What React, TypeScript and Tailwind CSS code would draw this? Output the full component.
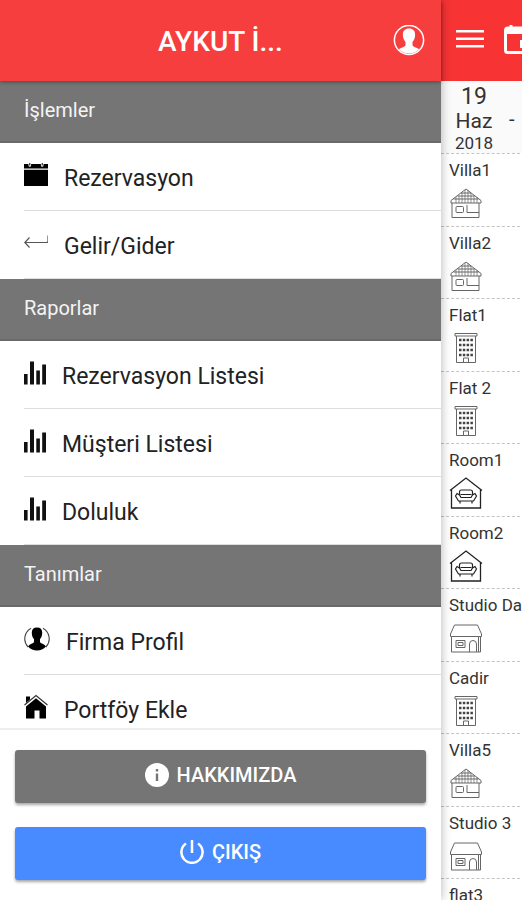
import React from 'react';

type IconName = 'calendar' | 'return' | 'stats' | 'contact' | 'home';
type RoomKind = 'villa' | 'flat' | 'room' | 'studio';

const sections: { title: string; items: { icon: IconName; label: string }[] }[] = [
  {
    title: 'İşlemler',
    items: [
      { icon: 'calendar', label: 'Rezervasyon' },
      { icon: 'return', label: 'Gelir/Gider' },
    ],
  },
  {
    title: 'Raporlar',
    items: [
      { icon: 'stats', label: 'Rezervasyon Listesi' },
      { icon: 'stats', label: 'Müşteri Listesi' },
      { icon: 'stats', label: 'Doluluk' },
    ],
  },
  {
    title: 'Tanımlar',
    items: [
      { icon: 'contact', label: 'Firma Profil' },
      { icon: 'home', label: 'Portföy Ekle' },
    ],
  },
];

const rooms: { name: string; kind: RoomKind }[] = [
  { name: 'Villa1', kind: 'villa' },
  { name: 'Villa2', kind: 'villa' },
  { name: 'Flat1', kind: 'flat' },
  { name: 'Flat 2', kind: 'flat' },
  { name: 'Room1', kind: 'room' },
  { name: 'Room2', kind: 'room' },
  { name: 'Studio Da', kind: 'studio' },
  { name: 'Cadir', kind: 'flat' },
  { name: 'Villa5', kind: 'villa' },
  { name: 'Studio 3', kind: 'studio' },
  { name: 'flat3', kind: 'flat' },
];

const MenuIcon = ({ name }: { name: IconName }) => {
  switch (name) {
    case 'calendar':
      return (
        <svg width="24" height="24" viewBox="0 0 24 24" fill="currentColor">
          <path d="M0 1h4.500v1.500a1 1 0 0 0 2.600 0V1h9.800v1.500a1 1 0 0 0 2.600 0V1H24v4.600H0z" />
          <path d="M0 6.800h24V23H0zM5.300 0h1v2.500h-1zM17.700 0h1v2.500h-1z" />
        </svg>
      );
    case 'return':
      return (
        <svg width="24" height="24" viewBox="0 0 24 24" fill="none" stroke="#555" strokeWidth="1.2">
          <path d="M24 4.500v5.500q0 1.500-1.500 1.500H1M5.500 6.500.8 11.500l4.700 5" />
        </svg>
      );
    case 'stats':
      return (
        <svg width="22" height="24" viewBox="0 0 22 24" fill="#111">
          <path d="M0 13h3.600v10.500H0zM6 .5h4v23H6zM12.300 9.500h3.600v14h-3.600zM18.200 3.500H22v20h-3.800z" />
        </svg>
      );
    case 'contact':
      return (
        <svg width="26" height="26" viewBox="0 0 26 26">
          <path d="M7 2.300a12 12 0 0 0-3 18.700M19 2.300a12 12 0 0 1 3 18.700" fill="none" stroke="#444" strokeWidth="1.100" />
          <path d="M13 1.500c3.600 0 5.400 2.200 5.200 5.400-.1 2.200-.5 4.200-2.200 6.100v3.200c1.500 1.600 4.600 1.800 6 4.300A12 12 0 0 1 4 20.500c1.400-2.500 4.500-2.700 6-4.300V13c-1.700-1.900-2.100-3.900-2.200-6.100C7.600 3.700 9.400 1.500 13 1.500z" fill="currentColor" />
        </svg>
      );
    case 'home':
      return (
        <svg width="24" height="26" viewBox="0 0 24 26">
          <path d="M2 2.500h4v3L2 9z" fill="currentColor" />
          <path d="M.5 11 12 1.500 23.500 11" fill="none" stroke="#333" strokeWidth="1.200" />
          <path d="M12 4.200 22 12.500v12h-6.500v-8h-5v8H2v-12z" fill="currentColor" />
        </svg>
      );
  }
};

const RoomIcon = ({ kind }: { kind: RoomKind }) => (
  <svg width="34" height="34" viewBox="0 0 34 34" fill="none" stroke="#666" strokeWidth="1">
    {kind === 'villa' && (
      <>
        <path d="M2 14.500 17 3l15 11.500v2.500H2zM3 17v14.500h27V17M12 7h10M8.500 10h17M4.500 13h25" />
        <path d="M7 11v6M10 10v7M13 7v10M16 4v13M19 4v13M22 7v10M25 10v7M28 11v6" strokeWidth=".7" />
        <path d="M8 20.500h5.500q1 0 1 1v4q0 1-1 1H8q-1 0-1-1v-4q0-1 1-1zM18 19v7.500M18 26.500h12" />
      </>
    )}
    {kind === 'flat' && (
      <>
        <path d="M6 2.500h22v2.500H6zM7.500 5v26.500h19V5M14.500 31v-4h5v4" />
        <path d="M10 9h14M10 14h14M10 19h14M10 24h14" stroke="#444" strokeWidth="2.500" strokeDasharray="2.500 1.300" />
      </>
    )}
    {kind === 'room' && (
      <g stroke="#222">
        <path d="M1 14.500 17 2l16 12.500M2.500 13.500v18.500h29V13.500" strokeWidth="1.300" />
        <path d="M10.500 18.500v-2.500q0-2 2-2h9q2 0 2 2v2.500M10.500 19l-2.500-1.500-1.500 2.500 3 5h15l3-5-1.500-2.500-2.500 1.500-1.500 2.500h-10zM11.500 18.500h11M11 25v2.500M23 25v2.500" strokeWidth="1.200" />
      </g>
    )}
    {kind === 'studio' && (
      <>
        <path d="M5.500 4h23l4 9v2.500h-3v15.500h-27V15.500h-1V13zM2.500 15.500h27M29.500 15.500h2V31h-2" />
        <path d="M7 19.500h9v7H7zM9 21.500h5v3H9zM20.500 31v-8q0-3.500 3.500-3.500t3.500 3.500v8" />
      </>
    )}
  </svg>
);

const SideMenu = () => (
  <aside className="relative z-10 flex h-full min-w-0 flex-1 flex-col bg-white shadow-[0_0_10px_rgba(0,0,0,0.3)]">
    <header className="relative z-10 flex h-[81px] shrink-0 items-center bg-[#f73e3f] pr-4 text-white shadow-[0_1px_4px_rgba(0,0,0,0.4)]">
      <h1 className="min-w-0 flex-1 pt-0.5 pl-12 text-center text-[28px] font-medium">AYKUT İ...</h1>
      <button aria-label="Profil">
        <svg width="32" height="32" viewBox="0 0 32 32">
          <circle cx="16" cy="15" r="14.600" fill="none" stroke="white" strokeWidth="1.500" />
          <path d="M16 3.500c4.200 0 6.300 2.700 6.100 6.500-.1 2.600-.7 4.800-2.600 7v3.500c1.700 1.900 4.700 2 6.700 3.700a14 14 0 0 1-20.400 0c2-1.700 5-1.800 6.700-3.700V17c-1.900-2.200-2.500-4.400-2.600-7-.2-3.800 1.900-6.500 6.100-6.500z" fill="white" />
        </svg>
      </button>
    </header>

    <nav className="min-h-0 flex-1 overflow-hidden">
      {sections.map((section) => (
        <section key={section.title}>
          <h2 className="flex h-[62px] items-center border-b-2 border-[#696969] bg-[#757575] px-6 pb-0.5 text-xl text-[#f4f4f4]">
            {section.title}
          </h2>
          <ul>
            {section.items.map((item) => (
              <li key={item.label} className="pl-6">
                <button className="flex h-[68px] w-full items-center gap-4 border-b border-[#dedede] text-left text-[23px] text-[#222]">
                  <span className="pb-1 text-black">
                    <MenuIcon name={item.icon} />
                  </span>
                  <span className="pt-1.5">{item.label}</span>
                </button>
              </li>
            ))}
          </ul>
        </section>
      ))}
    </nav>

    <footer className="flex shrink-0 flex-col gap-6 border-t-2 border-[#eeeeee] px-[15px] pt-5 pb-5 text-xl font-medium text-white">
      <button className="flex h-[53px] items-center justify-center gap-2 rounded-[3px] bg-[#757575] pb-1 shadow-[0_2px_3px_rgba(0,0,0,0.35)]">
        <svg width="24" height="24" viewBox="0 0 24 24">
          <circle cx="12" cy="12" r="12" fill="white" />
          <path d="M10.800 6h2.400v2.400h-2.400zM10.800 10.500h2.400V18h-2.400z" fill="#757575" />
        </svg>
        HAKKIMIZDA
      </button>
      <button className="flex h-[53px] items-center justify-center gap-2 rounded-[3px] bg-[#488aff] pb-1 shadow-[0_2px_3px_rgba(0,0,0,0.35)]">
        <svg width="24" height="24" viewBox="0 0 24 24" fill="none" stroke="white" strokeWidth="2.500">
          <path d="M12 0v13M6 3.500a10.600 10.600 0 1 0 12 0" />
        </svg>
        ÇIKIŞ
      </button>
    </footer>
  </aside>
);

const RoomPage = () => (
  <main className="h-full w-[81px] shrink-0 overflow-hidden bg-white">
    <header className="flex h-[81px] w-40 items-center gap-5 bg-[#f73334] pb-1 pl-[15px] text-white">
      <button aria-label="Menü">
        <svg width="28" height="20" viewBox="0 0 28 20" fill="white">
          <path d="M0 1h28v2.500H0zM0 8.500h28V11H0zM0 16h28v2.500H0z" />
        </svg>
      </button>
      <button aria-label="Takvim">
        <svg width="30" height="30" viewBox="0 0 30 30">
          <path d="M4 4h22q2.500 0 2.500 2.500v20q0 2-2.500 2H4q-2.500 0-2.500-2v-20Q1.500 4 4 4z" fill="none" stroke="white" strokeWidth="3" />
          <path d="M2 4h26v6H2zM5.500 1h3v4h-3zM21 1h3v4h-3zM16 16h8v8h-8z" fill="white" />
        </svg>
      </button>
    </header>
    <div className="flex h-[72px] w-40 items-center bg-[#fafafa] pt-1 text-[#333]">
      <div className="flex w-[66px] flex-col items-center text-[23px] leading-6">
        <span>19</span>
        <span className="text-[21px] leading-6">Haz</span>
        <span className="text-[17px] leading-5">2018</span>
      </div>
      <span className="pl-0.5 text-xl">-</span>
    </div>
    <ul className="w-40">
      {rooms.map((room, i) => (
        <li
          key={i}
          className="border-t border-dashed border-[#c4c4c4] pt-1 pl-2 text-[17px] text-[#333] odd:h-[73px] even:h-[72px]"
        >
          <div className="leading-6">{room.name}</div>
          <div className="pt-1">
            <RoomIcon kind={room.kind} />
          </div>
        </li>
      ))}
    </ul>
  </main>
);

const App: React.FC = () => (
  <div className="flex h-screen overflow-hidden bg-white font-[Roboto,sans-serif]">
    <SideMenu />
    <RoomPage />
  </div>
);

export default App;
